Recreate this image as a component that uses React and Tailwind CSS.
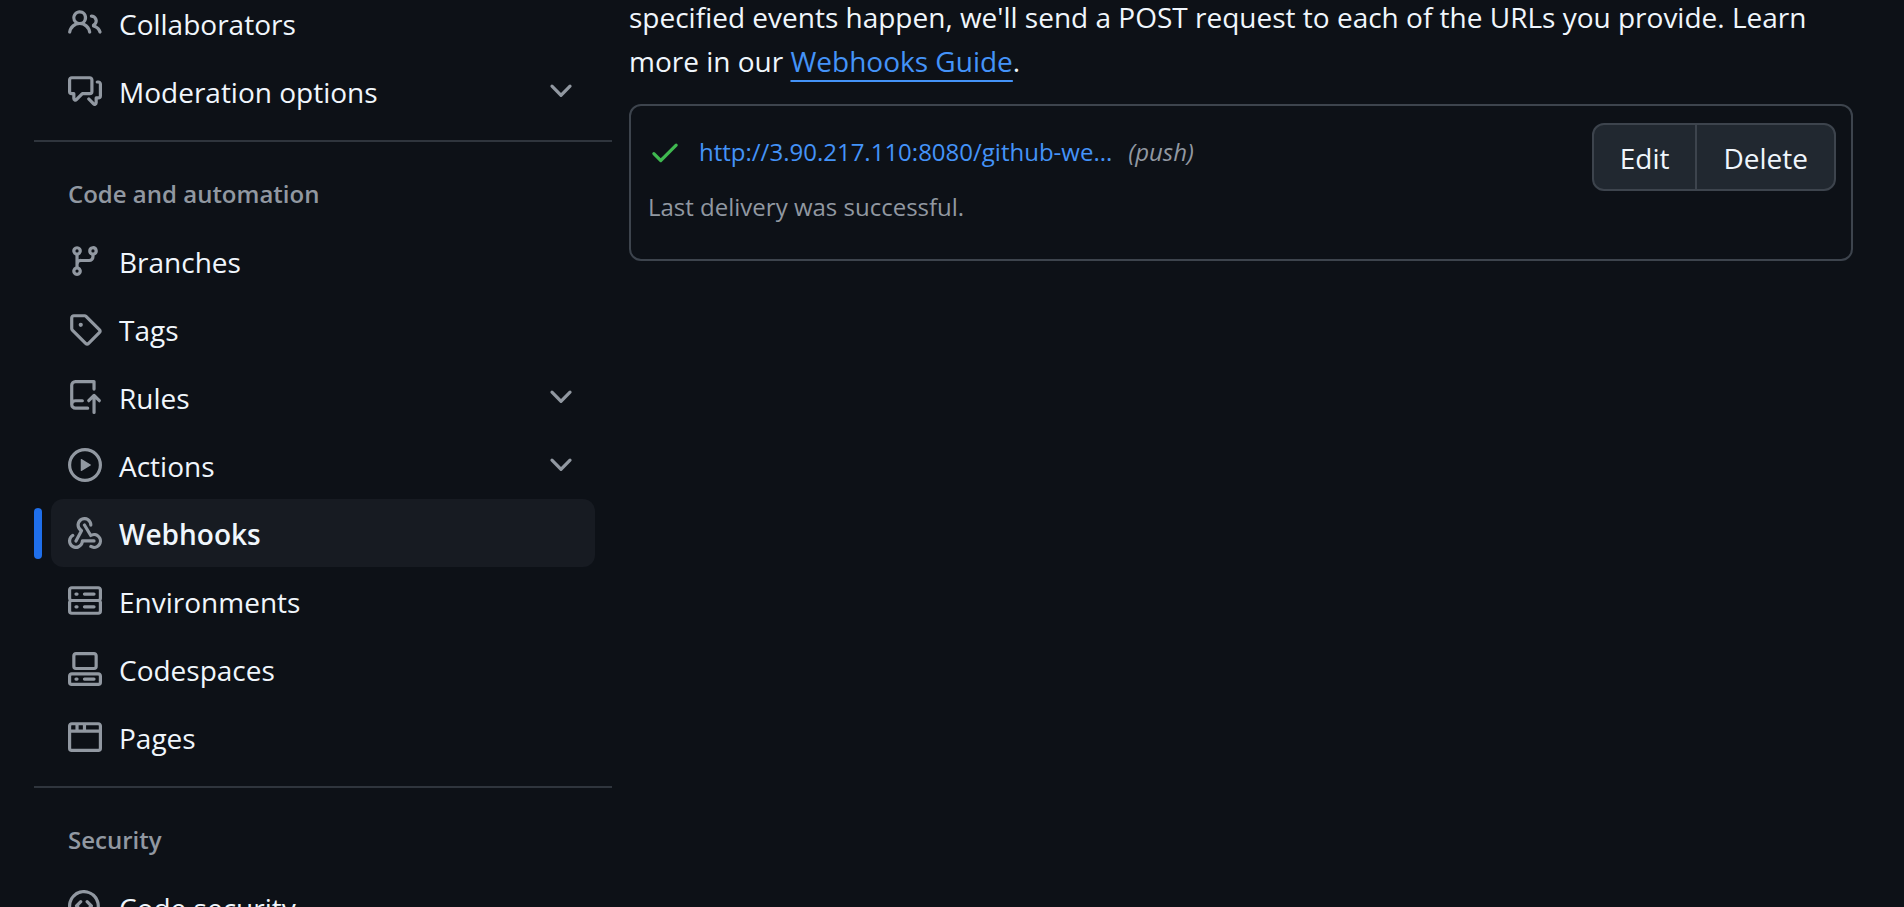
const ICONS = {
  people:
    'M2 5.5a3.5 3.5 0 1 1 5.898 2.549 5.508 5.508 0 0 1 3.034 4.084.75.75 0 1 1-1.482.235 4 4 0 0 0-7.9 0 .75.75 0 0 1-1.482-.236A5.507 5.507 0 0 1 3.102 8.05 3.493 3.493 0 0 1 2 5.5ZM11 4a3.001 3.001 0 0 1 2.22 5.018 5.01 5.01 0 0 1 2.56 3.012.749.749 0 0 1-.885.954.752.752 0 0 1-.549-.514 3.507 3.507 0 0 0-2.522-2.372.75.75 0 0 1-.574-.73v-.352a.75.75 0 0 1 .416-.672A1.5 1.5 0 0 0 11 5.5.75.75 0 0 1 11 4Zm-5.5-.5a2 2 0 1 0-.001 3.999A2 2 0 0 0 5.5 3.5Z',
  discussion:
    'M1.75 1h8.5c.966 0 1.75.784 1.75 1.75v5.5A1.75 1.75 0 0 1 10.25 10H7.061l-2.574 2.573A1.458 1.458 0 0 1 2 11.543V10h-.25A1.75 1.75 0 0 1 0 8.25v-5.5C0 1.784.784 1 1.75 1ZM1.5 2.75v5.5c0 .138.112.25.25.25h1a.75.75 0 0 1 .75.75v2.19l2.72-2.72a.749.749 0 0 1 .53-.22h3.5a.25.25 0 0 0 .25-.25v-5.5a.25.25 0 0 0-.25-.25h-8.5a.25.25 0 0 0-.25.25Zm13 2a.25.25 0 0 0-.25-.25h-.5a.75.75 0 0 1 0-1.5h.5c.966 0 1.75.784 1.75 1.75v5.5A1.75 1.75 0 0 1 14.25 12H14v1.543a1.458 1.458 0 0 1-2.487 1.03L9.22 12.28a.749.749 0 0 1 .326-1.275.749.749 0 0 1 .734.215l2.22 2.22v-2.19a.75.75 0 0 1 .75-.75h1a.25.25 0 0 0 .25-.25Z',
  branch:
    'M9.5 3.25a2.25 2.25 0 1 1 3 2.122V6A2.5 2.5 0 0 1 10 8.5H6a1 1 0 0 0-1 1v1.128a2.251 2.251 0 1 1-1.5 0V5.372a2.25 2.25 0 1 1 1.5 0v1.836A2.493 2.493 0 0 1 6 7h4a1 1 0 0 0 1-1v-.628A2.25 2.25 0 0 1 9.5 3.25Zm-6 0a.75.75 0 1 0 1.5 0 .75.75 0 0 0-1.5 0Zm8.25-.75a.75.75 0 1 0 0 1.5.75.75 0 0 0 0-1.5ZM4.25 12a.75.75 0 1 0 0 1.5.75.75 0 0 0 0-1.5Z',
  tag: 'M1 7.775V2.75C1 1.784 1.784 1 2.75 1h5.025c.464 0 .91.184 1.238.513l6.25 6.25a1.75 1.75 0 0 1 0 2.474l-5.026 5.026a1.75 1.75 0 0 1-2.474 0l-6.25-6.25A1.752 1.752 0 0 1 1 7.775Zm1.5 0c0 .066.026.13.073.177l6.25 6.25a.25.25 0 0 0 .354 0l5.025-5.025a.25.25 0 0 0 0-.354l-6.25-6.25a.25.25 0 0 0-.177-.073H2.75a.25.25 0 0 0-.25.25ZM6 5a1 1 0 1 1 0 2 1 1 0 0 1 0-2Z',
  repoPush:
    'M1 2.5A2.5 2.5 0 0 1 3.5 0h8.75a.75.75 0 0 1 .75.75v3.5a.75.75 0 0 1-1.5 0V1.5h-8a1 1 0 0 0-1 1v6.708A2.493 2.493 0 0 1 3.5 9h3.25a.75.75 0 0 1 0 1.5H3.5a1 1 0 0 0 0 2h5.75a.75.75 0 0 1 0 1.5H3.5A2.5 2.5 0 0 1 1 11.5Zm13.23 7.79h-.001l-1.224-1.224v6.184a.75.75 0 0 1-1.5 0V9.066L10.28 10.29a.75.75 0 0 1-1.06-1.061l2.505-2.504a.75.75 0 0 1 1.06 0L15.29 9.23a.751.751 0 0 1-.018 1.042.751.751 0 0 1-1.042.018Z',
  play: 'M8 0a8 8 0 1 1 0 16A8 8 0 0 1 8 0ZM1.5 8a6.5 6.5 0 1 0 13 0 6.5 6.5 0 0 0-13 0Zm4.879-2.773 4.264 2.559a.25.25 0 0 1 0 .428l-4.264 2.559A.25.25 0 0 1 6 10.559V5.442a.25.25 0 0 1 .379-.215Z',
  webhook:
    'M5.5 4.25a2.25 2.25 0 0 1 4.5 0 .75.75 0 0 0 1.5 0 3.75 3.75 0 1 0-6.14 2.889l-2.272 4.258a.75.75 0 0 0 1.324.706L7 7.25a.75.75 0 0 0-.309-1.015A2.25 2.25 0 0 1 5.5 4.25Z M7.364 3.607a.75.75 0 0 1 1.03.257l2.608 4.349a3.75 3.75 0 1 1-.628 6.785.75.75 0 0 1 .752-1.299 2.25 2.25 0 1 0-.033-3.88.75.75 0 0 1-1.03-.256L7.107 4.636a.75.75 0 0 1 .257-1.03Z M2.9 8.776A.75.75 0 0 1 2.625 9.8 2.25 2.25 0 1 0 6 11.75a.75.75 0 0 1 .75-.751h5.5a.75.75 0 0 1 0 1.5H7.425a3.751 3.751 0 1 1-5.55-3.998.75.75 0 0 1 1.024.274Z',
  server:
    'M1.75 1h12.5c.966 0 1.75.784 1.75 1.75v4c0 .372-.116.717-.314 1 .198.283.314.628.314 1v4a1.75 1.75 0 0 1-1.75 1.75H1.75A1.75 1.75 0 0 1 0 12.75v-4c0-.358.109-.707.314-1a1.739 1.739 0 0 1-.314-1v-4C0 1.784.784 1 1.75 1ZM1.5 2.75v4c0 .138.112.25.25.25h12.5a.25.25 0 0 0 .25-.25v-4a.25.25 0 0 0-.25-.25H1.75a.25.25 0 0 0-.25.25Zm.25 5.75a.25.25 0 0 0-.25.25v4c0 .138.112.25.25.25h12.5a.25.25 0 0 0 .25-.25v-4a.25.25 0 0 0-.25-.25ZM7 4.75A.75.75 0 0 1 7.75 4h4.5a.75.75 0 0 1 0 1.5h-4.5A.75.75 0 0 1 7 4.75ZM7.75 10h4.5a.75.75 0 0 1 0 1.5h-4.5a.75.75 0 0 1 0-1.5ZM3 4.75A.75.75 0 0 1 3.75 4h.5a.75.75 0 0 1 0 1.5h-.5A.75.75 0 0 1 3 4.75ZM3.75 10h.5a.75.75 0 0 1 0 1.5h-.5a.75.75 0 0 1 0-1.5Z',
  codespaces:
    'M0 11.25c0-.966.784-1.75 1.75-1.75h12.5c.966 0 1.75.784 1.75 1.75v3A1.75 1.75 0 0 1 14.25 16H1.75A1.75 1.75 0 0 1 0 14.25Zm2-9.5C2 .784 2.784 0 3.75 0h8.5C13.216 0 14 .784 14 1.75v5a1.75 1.75 0 0 1-1.75 1.75h-8.5A1.75 1.75 0 0 1 2 6.75Zm1.75-.25a.25.25 0 0 0-.25.25v5c0 .138.112.25.25.25h8.5a.25.25 0 0 0 .25-.25v-5a.25.25 0 0 0-.25-.25Zm-2 9.5a.25.25 0 0 0-.25.25v3c0 .138.112.25.25.25h12.5a.25.25 0 0 0 .25-.25v-3a.25.25 0 0 0-.25-.25Z M7 12.75a.75.75 0 0 1 .75-.75h4.5a.75.75 0 0 1 0 1.5h-4.5a.75.75 0 0 1-.75-.75Zm-4 0a.75.75 0 0 1 .75-.75h.5a.75.75 0 0 1 0 1.5h-.5a.75.75 0 0 1-.75-.75Z',
  browser:
    'M0 2.75C0 1.784.784 1 1.75 1h12.5c.966 0 1.75.784 1.75 1.75v10.5A1.75 1.75 0 0 1 14.25 15H1.75A1.75 1.75 0 0 1 0 13.25ZM14.5 6h-13v7.25c0 .138.112.25.25.25h12.5a.25.25 0 0 0 .25-.25Zm-6-3.5v2h6V2.75a.25.25 0 0 0-.25-.25ZM5 2.5v2h2v-2Zm-3.25 0a.25.25 0 0 0-.25.25V4.5h2v-2Z',
  codescan:
    'M8.47 4.97a.75.75 0 0 0 0 1.06L9.94 7.5 8.47 8.97a.75.75 0 1 0 1.06 1.06l2-2a.75.75 0 0 0 0-1.06l-2-2a.75.75 0 0 0-1.06 0ZM6.53 6.03a.75.75 0 0 0-1.06-1.06l-2 2a.75.75 0 0 0 0 1.06l2 2a.75.75 0 1 0 1.06-1.06L5.06 7.5l1.47-1.47Z M12.246 13.307a7.501 7.501 0 1 1 1.06-1.06l2.474 2.473a.749.749 0 0 1-.326 1.275.749.749 0 0 1-.734-.215ZM1.5 7.5a6.002 6.002 0 0 0 3.608 5.504 6.002 6.002 0 0 0 6.486-1.117.748.748 0 0 1 .292-.293A6 6 0 1 0 1.5 7.5Z',
  chevron:
    'M12.78 5.22a.749.749 0 0 1 0 1.06l-4.25 4.25a.749.749 0 0 1-1.06 0L3.22 6.28a.749.749 0 1 1 1.06-1.06L8 8.939l3.72-3.719a.749.749 0 0 1 1.06 0Z',
  check:
    'M13.78 4.22a.75.75 0 0 1 0 1.06l-7.25 7.25a.75.75 0 0 1-1.06 0L2.22 9.28a.751.751 0 0 1 .018-1.042.751.751 0 0 1 1.042-.018L6 10.94l6.72-6.72a.75.75 0 0 1 1.06 0Z',
};

function Icon({ name, className }) {
  return (
    <svg viewBox="0 0 16 16" fill="currentColor" aria-hidden="true" className={`size-[34px] shrink-0 ${className}`}>
      <path d={ICONS[name]} />
    </svg>
  );
}

const ROW = 'relative flex h-[68px] w-full items-center gap-[17px] rounded-xl px-[17px] text-left';

function NavItem({ icon, label, expandable, active }) {
  const content = (
    <>
      <Icon name={icon} className="text-[#9198a1]" />
      <span className={active ? 'grow pt-0.5 font-semibold' : 'grow pt-0.5'}>{label}</span>
      {expandable && <Icon name="chevron" className="text-[#9198a1]" />}
    </>
  );
  return (
    <li className="px-[17px]">
      {expandable ? (
        <button type="button" aria-expanded="false" className={ROW}>
          {content}
        </button>
      ) : (
        <a href="#" aria-current={active ? 'page' : undefined} className={active ? `${ROW} bg-[#171b22]` : ROW}>
          {active && <span className="absolute top-[9px] -left-[17px] h-[51px] w-2 rounded-full bg-[#1f6feb]" />}
          {content}
        </a>
      )}
    </li>
  );
}

function NavGroup({ title, items }) {
  return (
    <section className="mt-[15px] border-t-2 border-[#2f353d] pt-[32px]">
      <h3 className="px-[34px] pb-[13px] text-[24px] leading-[40px] font-semibold text-[#9198a1]">{title}</h3>
      <ul>
        {items.map((item) => (
          <NavItem key={item.label} {...item} />
        ))}
      </ul>
    </section>
  );
}

const ACCESS = [
  { icon: 'people', label: 'Collaborators' },
  { icon: 'discussion', label: 'Moderation options', expandable: true },
];

const AUTOMATION = [
  { icon: 'branch', label: 'Branches' },
  { icon: 'tag', label: 'Tags' },
  { icon: 'repoPush', label: 'Rules', expandable: true },
  { icon: 'play', label: 'Actions', expandable: true },
  { icon: 'webhook', label: 'Webhooks', active: true },
  { icon: 'server', label: 'Environments' },
  { icon: 'codespaces', label: 'Codespaces' },
  { icon: 'browser', label: 'Pages' },
];

const SECURITY = [{ icon: 'codescan', label: 'Code security' }];

export default function App() {
  return (
    <div className="flex h-screen gap-[17px] overflow-hidden bg-[#0d1117] pr-[51px] pl-[34px] font-['Open_Sans','Noto_Sans',sans-serif] text-[28px] leading-[44px] text-[#f0f6fc]">
      <nav aria-label="Repository settings" className="-mt-[11px] w-[578px] shrink-0">
        <ul>
          {ACCESS.map((item) => (
            <NavItem key={item.label} {...item} />
          ))}
        </ul>
        <NavGroup title="Code and automation" items={AUTOMATION} />
        <NavGroup title="Security" items={SECURITY} />
      </nav>

      <main className="-mt-[5px] min-w-0 grow">
        <p>
          specified events happen, we'll send a POST request to each of the URLs you provide. Learn more in our{' '}
          <a href="#" className="text-[#4493f8] underline decoration-2 underline-offset-8">
            Webhooks Guide
          </a>
          .
        </p>

        <section className="mt-[21px] flex items-start justify-between rounded-xl border-2 border-[#3d444d] pt-[17px] pr-[15px] pb-[15px] pl-[17px]">
          <div className="text-[24px] leading-[38px]">
            <div className="flex items-center pt-2.5">
              <Icon name="check" className="text-[#3fb950]" />
              <a href="#" className="ml-[17px] text-[#4493f8]">
                http://3.90.217.110:8080/github-we...
              </a>
              <em className="ml-4 text-[#9198a1]">(push)</em>
            </div>
            <p className="mt-[17px] mb-[18px] text-[#9198a1]">Last delivery was successful.</p>
          </div>
          <div className="flex h-[68px] overflow-hidden rounded-xl border-2 border-[#3d444d] bg-[#212830]">
            <button type="button" className="border-r-2 border-[#3d444d] px-[26px] pt-0.5">
              Edit
            </button>
            <button type="button" className="px-[26px] pt-0.5">
              Delete
            </button>
          </div>
        </section>
      </main>
    </div>
  );
}
